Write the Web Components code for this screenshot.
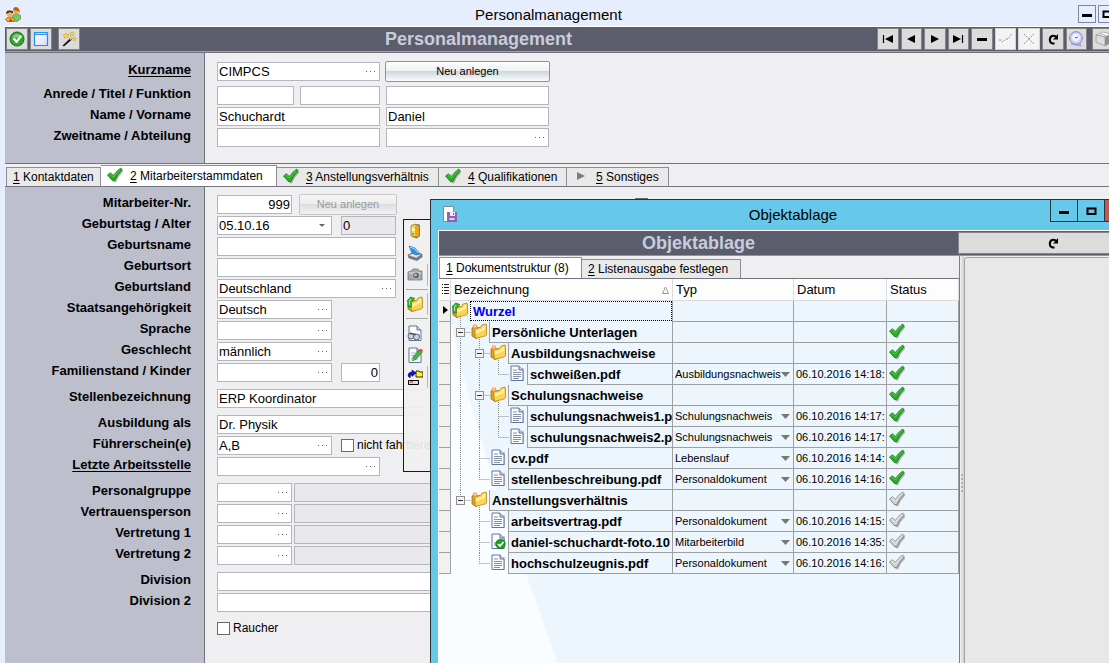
<!DOCTYPE html>
<html lang="de">
<head>
<meta charset="utf-8">
<title>Personalmanagement</title>
<style>
html, body { height: 100%; margin: 0; }
body { font: 13px/17px "Liberation Sans", Arial, sans-serif; color: #000; background: #efeff1; overflow: hidden; }
</style>
</head>
<body>
<pm-app></pm-app>

<script>
const define = (name, css, html, setup) => customElements.define(name, class extends HTMLElement {
  connectedCallback() {
    if (this.shadowRoot) return;
    const t = document.createElement('template');
    t.innerHTML = `<style>*{box-sizing:border-box}${css}</style>${typeof html === 'function' ? html(this) : html}`;
    this.attachShadow({ mode: 'open' }).append(t.content.cloneNode(true));
    if (setup) setup(this);
  }
});

/* ---------- icons ---------- */
const page = '<path d="M2 1h8l4 4v10.500H2z" fill="#fcfdff" stroke="#60749c"/><path d="M10 1v4h4" fill="#c6d4ee" stroke="#60749c"/>';
const folder = '<path d="M1 5l4-2 1 2 3-.5V14l-4 1.500L1 13z" fill="#d9a41f" stroke="#8f6a12" stroke-width=".7"/><path d="M3.500 6l6-1.500 1.500-2.500 4-1 .5 1V12l-1.500 1-9.500 2.500z" fill="#fbd453" stroke="#a97c14" stroke-width=".7"/><path d="M5 7.500l5.500-1.500L12 3.500l2-.7v4L5 11z" fill="#fff0a0"/>';
const tick = (a, b, c) => `<path d="M1.500 9l3-2.500L7 9.500Q10 4.500 14.500 2l1.500 1.500Q11 8 8.500 14.500H6.500z" fill="#777" opacity=".55" transform="translate(.6 .8)"/><path d="M.5 8l3-2.300L6.300 8.500Q10 3.500 13.700 1L15.200 2.800Q10.500 7.500 7.800 13.500H5.300z" fill="${a}" stroke="${b}" stroke-width=".7"/><path d="M2.500 8L3.700 7l2.600 3Q9 6 13 2.700" fill="none" stroke="${c}" stroke-width=".7"/>`;
const ICONS = {
  users: '<circle cx="11" cy="4" r="3" fill="#f2a23a"/><path d="M8 3.500q3-5 6.500.5l.5 3-2-2-4-1z" fill="#c85e12"/><path d="M7.500 15V9.500q3.500-4 8 0V13L12 15.500z" fill="#7cc860" stroke="#3a7c2c" stroke-width=".6"/><circle cx="4.500" cy="8" r="2.800" fill="#f0b44c"/><path d="M1 8q0-4 4-3.500 4 0 3 3l-3-1.500z" fill="#4c2a14"/><path d="M.5 13q4-4 9 0l-1 2.500H2z" fill="#f0b424" stroke="#8a4a10" stroke-width=".6"/><path d="M5 12l3 3.500-4 .5z" fill="#d43820"/>',
  ok: '<circle cx="8" cy="8" r="7" fill="#2ea82e" stroke="#137213"/><path d="M3 6q5-6 10 0-5 1-10 0z" fill="#82d27e"/><path d="M3.500 8l2-1.500L7.500 9l4-5L13 5.500 8 12H7z" fill="#fff"/>',
  window: '<defs><linearGradient id="w" x2="1" y2="1"><stop stop-color="#fff"/><stop offset="1" stop-color="#d4dcf8"/></linearGradient></defs><path d="M1.500 1.500h13v13h-13z" fill="url(#w)" stroke="#1f8fee" stroke-width="1.200"/><path d="M1 1h14v3H1z" fill="#2a96f4"/><path d="M2.500 2.500h11" stroke="#b5e0ff"/>',
  wand: '<path d="M1.500 14.500l8-7.500 1.500 1.500-8 7z" fill="#1a1a1a"/><path d="M8.500 8l2-1.500 1 1L9.700 9z" fill="#fff" stroke="#555" stroke-width=".5"/><g fill="#ffd935" stroke="#c9961a" stroke-width=".5"><path d="M5 2l1 1.500 2 .2-1.300 1.300.3 2L5 6l-2 1 .4-2L2 3.700l2-.2z"/><path d="M11 .5l.7 1.500 1.800.2-1.300 1.200.3 1.700L11 4.300 9.300 5l.4-1.600L8.500 2.200 10.300 2z"/><path d="M13.500 6l.5 1 1.500.3-1 1 .2 1.400-1.200-.7-1.300.7.2-1.500-1-1 1.400-.2z"/></g>',
  first: '<path d="M3.500 4v8" stroke="#000" stroke-width="1.200"/><path d="M13 4v8L5 8z"/>',
  prev: '<path d="M12 4v8L4 8z"/>', next: '<path d="M4 4v8L12 8z"/>',
  last: '<path d="M12.500 4v8" stroke="#000" stroke-width="1.200"/><path d="M3 4v8L11 8z"/>',
  minus: '<path d="M3 7h10v3H3z"/>',
  commit: '<path d="M1 9h2l2 3 3-4h2l4-5" fill="none" stroke="#fff" transform="translate(1 1)"/><path d="M1 9h2l1.500 2L8 8h2l4-5" fill="none" stroke="#8e8e8e" stroke-dasharray="2 1"/>',
  cancel: '<path d="M4 4l10 10M14 4L4 14" stroke="#fff"/><path d="M3 3l10 10M13 3L3 13" stroke="#8e8e8e" stroke-dasharray="2 1"/>',
  reload: '<path d="M9.500 12.500H7.500C4 11.500 4 6.500 7 5q2.500-1 4.500 1" fill="none" stroke="#000" stroke-width="2"/><path d="M13 3v5.500H8z"/>',
  clock: '<path d="M3 13l10 2-1-3H5z" fill="#b4b8e8" stroke="#7f83bd" stroke-width=".6"/><circle cx="8" cy="7" r="6.300" fill="#cfd3fa" stroke="#8084c8"/><circle cx="8" cy="6.500" r="3.800" fill="#f2f4ff"/><path d="M8 7l2-1M7 6l1 1" stroke="#5a5eae"/>',
  cube: '<path d="M1 4l7-3 8 2-6 3z" fill="#fafafa" stroke="#888" stroke-width=".6"/><path d="M1 4l9 2v9l-9-4z" fill="#ddd" stroke="#888" stroke-width=".6"/><path d="M10 6l6-3v9l-6 3z" fill="#8e8e8e"/><path d="M5 3l6 1.500" stroke="#aaa"/>',
  play: '<path d="M4 4v8L12 8z" fill="#7c7c7c"/>',
  check: tick('#27ae24', '#157015', '#6bd95c'), checkgray: tick('#d2d2d2', '#6e6e6e', '#f6f6f6'),
  doc: '<path d="M4 3h11v13H4z" fill="#8b94a8" opacity=".5"/>' + page + '<path d="M4 5h4M4 7.500h8M4 9.500h8M4 11.500h8M4 13.500h6" stroke="#8490a8"/>',
  docok: '<path d="M4 3h11v13H4z" fill="#8b94a8" opacity=".5"/>' + page + '<path d="M4 9h4v4H4z" fill="#b9c6dc"/><circle cx="10.500" cy="11" r="4.800" fill="#23a023" stroke="#0f6d12" stroke-width=".6"/><path d="M8 11l2 2 3.500-4" fill="none" stroke="#fff" stroke-width="1.700"/>',
  folder: folder + '<circle cx="4" cy="3.500" r="2.300" fill="#ff9a4a" opacity=".9"/><circle cx="4" cy="3.500" r=".9" fill="#fff2c8"/>',
  root: folder + '<path d="M1 11V5L0 5 3.500 1 8 2.500 6 4Q3.500 6 4.500 11z" fill="#3fb336" stroke="#1b741b" stroke-width=".7"/><path d="M2.500 9V5L4 3" fill="none" stroke="#a6e89c"/>',
  save: '<path d="M1.500.5h10v15h-10z" fill="#fff" stroke="#8a8a92"/><path d="M5 6h10v10H5z" fill="#8f62b4"/><path d="M8 6h5v4H8z" fill="#f2eafa"/><path d="M11 7h1v2h-1z" fill="#8f62b4"/><path d="M7.500 12h5v2h-5z" fill="#e2d2ef"/>',
  binder: '<path d="M5 2l6-1 2 1v11l-3 2.500-5-1.500z" fill="#777b80"/><path d="M4 2.500l5-1.500v13l-5-1z" fill="#ffd045" stroke="#9a741c" stroke-width=".7"/><path d="M9 2l3 1v10l-3 1z" fill="#e9a51c"/><path d="M5 5h2.500v3H5z" fill="#fff7cc"/><path d="M5 10h2v2H5z" fill="#6fbf4c"/>',
  scanner: '<path d="M1 10l4-2 10 1v3l-5 3.500L2 13z" fill="#77808b" stroke="#505860" stroke-width=".6"/><path d="M2 10.500l4-2 8 1-4.500 3z" fill="#e3e8ee"/><path d="M2 1l6 2 5 6-4 1-4-2z" fill="#2f94df" stroke="#1b64a8" stroke-width=".6"/><path d="M3 2l5 2 3 4" stroke="#a5dcff" fill="none"/>',
  camera: '<path d="M1 5l3-1 2-2h5l1 2h3v9H1z" fill="#a6a9b0" stroke="#6c6f78" stroke-width=".7"/><path d="M2 6h12" stroke="#e0e2e6"/><circle cx="9" cy="8.500" r="3.500" fill="#5a5e68" stroke="#ddd" stroke-width=".8"/><circle cx="8.500" cy="8" r="1.500" fill="#b4bac8"/>',
  search: page + '<path d="M11 10l3-2v5z" fill="#b6c4dc"/><circle cx="4" cy="11" r="3" fill="#c9d2da" stroke="#5c6672"/><circle cx="9.500" cy="12" r="3" fill="#c9d2da" stroke="#5c6672"/><path d="M3 8.500l6 1" stroke="#4c5662" stroke-width="1.500"/>',
  edit: page + '<path d="M4 6h6M4 8.500h4M4 12h7" stroke="#9fb6e0"/><path d="M5 14l1-4 6-7 3 2.500-6 7z" fill="#49b53d" stroke="#226e1d" stroke-width=".6"/><path d="M12 3l1.500-1.500 2.500 2L15 5.500z" fill="#e84a3c"/><path d="M5 14l.7-2.500L7 12.700z" fill="#e8c88e"/>',
  move: '<path d="M1 7Q1 3 5 3V1l4 3-4 3.500V6Q3 6 3 9z" fill="#1010e8" stroke="#000" stroke-width=".5"/><path d="M9 2h3l1 1h3v5H9z" fill="#fff22e" stroke="#000" stroke-width=".8"/><path d="M1.500 11.500h10v4h-10z" fill="#ddd" stroke="#000"/><path d="M3 13h3" stroke="#e01010"/>',
  min: '<path d="M3 8h10v3H3z"/>', max: '<path d="M4.500 5.500h8v5.500h-8z" fill="none" stroke="#000" stroke-width="2"/>'
};
define('pm-icon', ':host{display:block;flex:none;width:16px;height:16px}svg{display:block;width:100%;height:100%}',
  el => `<svg viewBox="0 0 16 16" aria-hidden="true">${ICONS[el.getAttribute('name')]}</svg>`);

define('tool-button', `:host{display:block;width:22px;height:22px}
button{display:flex;align-items:center;justify-content:center;width:100%;height:100%;padding:0;border:1px solid #858587;background:#dcdcdc}
:host([off]) button{background:#f3f3f3;border-color:#d4d4d4}`,
  el => `<button type="button" aria-label="${el.getAttribute('icon')}"><pm-icon name="${el.getAttribute('icon')}"></pm-icon></button>`);

/* ---------- tabs: items are "icon|key|text|width" ---------- */
define('tab-strip', `:host{display:block;background:#efeff1}
div{display:flex;align-items:flex-end;padding:var(--tab-pad,1px 1px 0);border-bottom:1px solid #72757d}
button{display:flex;align-items:center;gap:7px;height:19px;margin:0;padding:0 6px;border:1px solid #8a8e97;border-width:1px 1px 0 0;background:#e9e9ea;font:12px/17px "Liberation Sans",Arial,sans-serif;color:#000;white-space:pre;text-align:left}
button:first-child{border-left-width:1px}
button[aria-selected=true]{height:21px;background:#fff}
pm-icon{margin-top:-2px}
u{text-underline-offset:2px}`,
  el => `<div role="tablist">${el.getAttribute('items').split(';').map((s, i) => {
    const [icon, key, text, w] = s.split('|');
    return `<button role="tab" aria-selected="${i == el.getAttribute('selected')}" style="width:${w}px">${icon ? `<pm-icon name="${icon}"></pm-icon>` : ''}<span><u>${key}</u> ${text}</span></button>`;
  }).join('')}</div>`);

/* ---------- one form line: a caption and its controls ---------- */
const control = (f, id, label) => {
  const gap = f.gap ? `margin-left:${f.gap}px;` : '';
  if (f.kind === 'button') return `<button type="button" style="${gap}width:${f.w}px" ${f.off ? 'disabled' : ''}>${f.v}</button>`;
  if (f.kind === 'check') return `<span class="check" style="${gap}"><input type="checkbox" id="${id}" ${f.v ? '' : 'aria-label="Option"'}>${f.v ? `<label for="${id}">${f.v}</label>` : ''}</span>`;
  return `<span class="box ${f.kind || ''} ${f.ro ? 'ro' : ''}" style="${gap}width:${f.w}px"><input id="${id}" aria-label="${label}" value="${f.v || ''}" ${f.ro ? 'readonly' : ''} class="${f.right ? 'right' : ''}">${f.kind === 'dots' ? '<svg viewBox="0 0 9 2"><path d="M0 0h1v1H0zM4 0h1v1H4zM8 0h1v1H8z" fill="#666"/></svg>' : f.kind === 'date' ? '<svg class="arrow" viewBox="0 0 6 3"><path d="M0 0h6L3 3z" fill="#666"/></svg>' : ''}</span>`;
};
define('form-line', `:host{display:flex;height:19px;align-items:center;white-space:nowrap}
.caption{flex:none;width:200px;padding-right:14px;text-align:right;font-weight:bold;line-height:17px;padding-bottom:4px;text-underline-offset:2px}
:host([link]) .caption{text-decoration:underline}
.controls{display:flex;align-items:center;padding-left:12px}
.box{position:relative;flex:none;display:flex;height:19px;border:1px solid #b3b6bd;background:#fff}
.box.ro{background:#e9e9eb}
.box input{flex:1;min-width:0;padding:0 1px;border:0;background:none;font:inherit;line-height:17px;outline:0}
.right{text-align:right}
.box svg{flex:none;align-self:center;width:9px;height:2px;margin-right:4px}
.box svg.arrow{width:6px;height:3px;margin-right:6px}
button{flex:none;height:21px;padding:0;border:1px solid #8b949c;border-radius:2px;background:linear-gradient(#fdfdfe,#eef1f4 45%,#cfd7df 50%,#dfe6ec 70%,#fbfcfd);font:11px/17px "Liberation Sans",Arial,sans-serif;color:#000}
button:disabled{border-color:#c6c6c8;background:linear-gradient(#f6f6f6,#ededed 45%,#dedede 50%,#f2f2f2);color:#9a9a9c}
.check{display:flex;align-items:center;gap:3px;font-size:12px}
.check input{appearance:none;width:13px;height:13px;margin:0;border:1px solid #6a6a6a;background:#fff}`,
  el => {
    const label = el.getAttribute('label') || '';
    const fields = JSON.parse(el.getAttribute('fields'));
    return `<label class="caption" ${label ? 'for="f0"' : ''}>${label}</label><div class="controls">${fields.map((f, i) => control(f, 'f' + i, label || 'Feld')).join('')}</div>`;
  });

define('form-block', `:host{display:block;overflow:hidden;background:linear-gradient(90deg,#bdbfcd 199px,#70737b 199px,#70737b 200px,#efeff1 200px)}
form-line{margin-top:2px}form-line:first-child{margin-top:0}form-line[space="5"]{margin-top:5px}form-line[space="7"]{margin-top:7px}`,
  '<div></div>', el => {
    const holder = el.shadowRoot.querySelector('div');
    for (const [label, fields, space, link] of FORMS[el.getAttribute('data')]) {
      const line = document.createElement('form-line');
      line.setAttribute('label', label);
      line.setAttribute('fields', JSON.stringify(fields));
      if (space) line.setAttribute('space', space);
      if (link) line.setAttribute('link', '');
      holder.append(line);
    }
  });

const dots = (w, v, gap) => ({ w, v, gap, kind: 'dots' });
const box = (w, v, gap) => ({ w, v, gap });
const pair = [dots(75), { w: 254, gap: 2, ro: 1 }];
const FORMS = {
  head: [
    ['Kurzname', [dots(163, 'CIMPCS'), { kind: 'button', w: 165, v: 'Neu anlegen', gap: 5 }], 0, 1],
    ['Anrede / Titel / Funktion', [box(77), box(80, '', 6), box(163, '', 6)], 5],
    ['Name / Vorname', [box(163, 'Schuchardt'), box(163, 'Daniel', 6)]],
    ['Zweitname / Abteilung', [box(163), dots(163, '', 6)]]
  ],
  detail: [
    ['Mitarbeiter-Nr.', [{ w: 75, v: '999', right: 1 }, { kind: 'button', w: 98, v: 'Neu anlegen', gap: 7, off: 1 }, { kind: 'check', gap: 238 }]],
    ['Geburtstag / Alter', [{ w: 115, v: '05.10.16', kind: 'date' }, { w: 55, v: '0', gap: 9, ro: 1 }]],
    ['Geburtsname', [box(179)]], ['Geburtsort', [box(179)]],
    ['Geburtsland', [dots(179, 'Deutschland')]],
    ['Staatsangehörigkeit', [dots(115, 'Deutsch')]],
    ['Sprache', [dots(115)]],
    ['Geschlecht', [dots(115, 'männlich')]],
    ['Familienstand / Kinder', [dots(115), { w: 39, v: '0', gap: 9, right: 1 }]],
    ['Stellenbezeichnung', [box(331, 'ERP Koordinator')], 7],
    ['Ausbildung als', [box(331, 'Dr. Physik')], 7],
    ['Führerschein(e)', [dots(115, 'A,B'), { kind: 'check', v: 'nicht fahrbereit', gap: 9 }]],
    ['Letzte Arbeitsstelle', [dots(163)], 0, 1],
    ['Personalgruppe', pair, 7], ['Vertrauensperson', pair], ['Vertretung 1', pair], ['Vertretung 2', pair],
    ['Division', [box(331)], 7], ['Division 2', [box(331)]],
    ['', [{ kind: 'check', v: 'Raucher' }], 7]
  ]
};

/* ---------- floating tool palette ---------- */
define('tool-palette', `:host{display:flex;flex-direction:column;border:1px solid #1a1a1a;background:rgba(240,240,241,.93)}
button{display:flex;align-items:center;height:22px;padding:0 0 0 3px;border:0;background:none;margin-right:2px}
.bar{border-right:1px solid #b5b5b8}
hr{width:22px;margin:3px 0 3px 2px;border:0;border-top:1px solid #a9a9ac}`,
  ['binder', 'scanner', '*camera', '-', '*root', '-', 'search', 'edit', '*move'].map(n => n === '-' ? '<hr>' : `<button type="button" ${n[0] === '*' ? 'class="bar"' : ''} aria-label="${n.replace('*', '')}"><pm-icon name="${n.replace('*', '')}"></pm-icon></button>`).join(''));

/* ---------- document tree ---------- */
const DOCS = [
  [0, 'root', 'Wurzel'],
  [1, 'folder', 'Persönliche Unterlagen', '', '', 1],
  [2, 'folder', 'Ausbildungsnachweise', '', '', 1],
  [3, 'doc', 'schweißen.pdf', 'Ausbildungsnachweis', '06.10.2016 14:18:', 1],
  [2, 'folder', 'Schulungsnachweise', '', '', 1],
  [3, 'doc', 'schulungsnachweis1.p', 'Schulungsnachweis', '06.10.2016 14:17:', 1],
  [3, 'doc', 'schulungsnachweis2.p', 'Schulungsnachweis', '06.10.2016 14:17:', 1],
  [2, 'doc', 'cv.pdf', 'Lebenslauf', '06.10.2016 14:14:', 1],
  [2, 'doc', 'stellenbeschreibung.pdf', 'Personaldokument', '06.10.2016 14:16:', 1],
  [1, 'folder', 'Anstellungsverhältnis', '', '', 2],
  [2, 'doc', 'arbeitsvertrag.pdf', 'Personaldokument', '06.10.2016 14:15:', 2],
  [2, 'docok', 'daniel-schuchardt-foto.10', 'Mitarbeiterbild', '06.10.2016 14:35:', 2],
  [2, 'doc', 'hochschulzeugnis.pdf', 'Personaldokument', '06.10.2016 14:16:', 2]
];
const continues = (i, level) => {
  for (let j = i + 1; j < DOCS.length; j++) {
    if (DOCS[j][0] < level) return false;
    if (DOCS[j][0] === level) return true;
  }
  return false;
};
const gutter = (i) => {
  const [level, icon] = DOCS[i];
  let s = '';
  for (let l = 1; l <= level; l++) {
    const x = 19 * l - 9.5, more = continues(i, l);
    if (l === level) s += `<path d="M${x} 0V${more ? 21 : 10.5}M${x} 10.500H${19 * l + 1}"/>`;
    else if (more) s += `<path d="M${x} 0V21"/>`;
  }
  if (icon === 'folder' || icon === 'root') s += `<path d="M${19 * level + 9.5} 17V21"/>`;
  const w = 19 * (level + 1);
  const x = 19 * level - 14;
  const knob = icon === 'folder' ? `<rect x="${x + .5}" y="6.500" width="8" height="8" fill="#f4f4f4" stroke="#909090"/><path d="M${x + 2} 10.500h5" stroke="#333"/>` : '';
  const iconX = 19 * level + (icon === 'folder' || icon === 'root' ? 1 : 1);
  return `<svg width="${w}" height="21" viewBox="0 0 ${w} 21"><g fill="none" stroke="#8c8c8c" stroke-dasharray="1 1">${s}</g>${knob}<svg x="${iconX}" y="1" width="16" height="16" viewBox="0 0 16 16">${ICONS[icon]}</svg></svg>`;
};
define('document-tree', `:host{display:block;position:relative;flex:1;overflow:hidden;background:#edf5fd}
.sweep{position:absolute;left:0;top:42px;width:130px;height:345px}
table{position:relative;width:100%;border-collapse:separate;border-spacing:0;table-layout:fixed}
th{height:22px;padding:0 3px;border-right:1px solid #dcdcde;border-bottom:1px solid #d8dade;background:#fdfdfd;font-weight:normal;text-align:left;line-height:17px}
th svg{display:block}
th span{display:flex;justify-content:space-between;align-items:center}
td{height:21px;padding:0;border-right:1px solid #a0a0a0;border-bottom:1px solid #a0a0a0;background:#edf5fd;font-size:11px;line-height:17px;overflow:hidden;white-space:nowrap}
td:first-child{background:#f1f1f1}
td.tree{border-bottom:0;background:none}
.tree div{display:flex;height:21px}
.tree svg{flex:none;display:block}
.name{flex:1;min-width:0;overflow:hidden;border-left:1px solid #a0a0a0;border-bottom:1px solid #a0a0a0;background:#edf5fd;padding:2px 0 0 2px;font:bold 13px/17px "Liberation Sans",Arial,sans-serif}
.name.root{border:1px dotted #000;color:#0000f0;padding-top:1px;height:20px}
select{display:block;appearance:none;width:100%;height:19px;margin:0;padding:0 0 0 2px;border:0;border-radius:0;font:11px/17px "Liberation Sans",Arial,sans-serif;color:#000;background:url("data:image/svg+xml,%3Csvg xmlns='http://www.w3.org/2000/svg' width='9' height='5'%3E%3Cpath d='M0 0h9L4.500 5z' fill='%23777'/%3E%3C/svg%3E") no-repeat right 3px center}
.date{padding-left:2px}
.state pm-icon{margin:-2px 0 0 2px}`,
  `<svg class="sweep" viewBox="0 0 130 345"><path d="M0 0h12Q26 70 52 150T120 345H0z" fill="#fafdff"/></svg>
<table><colgroup><col style="width:12px"><col style="width:222px"><col style="width:121px"><col style="width:93px"><col></colgroup>
<thead><tr><th><svg width="7" height="11" viewBox="0 0 7 11"><path d="M0 .5h1M2 .5h5M0 3.500h1M2 3.500h5M0 6.500h1M2 6.500h5M0 9.500h1M2 9.500h5" stroke="#222"/></svg></th><th><span>Bezeichnung <svg width="7" height="8" viewBox="0 0 7 8"><path d="M.5 7.500h6L3.500 1z" fill="none" stroke="#999"/></svg></span></th><th>Typ</th><th>Datum</th><th>Status</th></tr></thead>
<tbody>${DOCS.map(([level, icon, name, type, date, state], i) => `<tr><td>${i ? '' : '<svg width="11" height="10" viewBox="0 0 11 10"><path d="M4 1l5 4-5 4z"/></svg>'}</td><td class="tree"><div>${gutter(i)}<span class="name ${icon}">${name}</span></div></td><td>${type ? `<select aria-label="Typ"><option>${type}</option></select>` : ''}</td><td class="date">${date || ''}</td><td class="state">${state ? `<pm-icon name="${state === 1 ? 'check' : 'checkgray'}"></pm-icon>` : ''}</td></tr>`).join('')}</tbody></table>`);

define('object-window', `:host{display:flex;flex-direction:column;border:1px solid #27363e;border-bottom:0;background:#66c9ea}
.title{display:grid;grid-template-columns:110px 1fr 110px;height:30px;font-size:15px;line-height:30px;text-align:center}
.title pm-icon{margin:6px 0 0 11px}
.controls{display:flex;justify-self:end;height:22px}
.controls button{display:flex;align-items:center;justify-content:center;width:27px;padding:0;border:1px solid #27363e;border-width:0 0 1px 1px;background:none}
.controls pm-icon{margin:0}
.controls button.close{width:51px;background:#c75850}
.inner{flex:1;display:flex;flex-direction:column;min-height:0;margin:0 7px;border:1px solid #fff;border-bottom:0}
.bar{display:flex;height:25px;padding:1px 0;background:#5b5d6d;border-bottom:1px solid #93959d}
h2{flex:1;margin:0;font-size:18px;line-height:22px;text-align:center;color:#c9ccdb}
.bar tool-button{width:189px}
.panes{flex:1;display:flex;min-height:0;background:#efeff1}
.left{display:flex;flex-direction:column;width:521px;border-right:1px solid #7b7e87}
tab-strip{--tab-pad:1px 0 0}
.split{width:4px;background:linear-gradient(90deg,#f2f2f4,#cdcfd4)}
.split svg{display:block;width:4px;height:18px;margin-top:218px}
.right{flex:1;margin-top:1px;border:1px solid #a3a3a5;border-bottom:0;border-radius:3px 0 0 0;background:#e8e8e8}`,
  `<div class="title"><pm-icon name="save"></pm-icon><span>Objektablage</span><div class="controls"><button aria-label="Minimieren"><pm-icon name="min"></pm-icon></button><button aria-label="Maximieren"><pm-icon name="max"></pm-icon></button><button class="close" aria-label="Schließen"></button></div></div>
<div class="inner"><div class="bar"><h2>Objektablage</h2><tool-button icon="reload"></tool-button></div>
<div class="panes"><div class="left"><tab-strip selected="0" items="|1|Dokumentstruktur (8)|143;|2|Listenausgabe festlegen|159"></tab-strip><document-tree></document-tree></div>
<div class="split"><svg viewBox="0 0 4 18"><path d="M1 1h2M1 5h2M1 9h2M1 13h2M1 17h2" stroke="#888"/></svg></div><div class="right"></div></div></div>`);

define('pm-app', `:host{display:flex;flex-direction:column;position:relative;min-height:100vh;padding-left:5px;overflow:hidden;background:#e6edfd}
.title{display:flex;height:27px;border-bottom:1px solid #fff;font-size:15px;line-height:29px}
.title>pm-icon{margin-top:6px}
.title span{flex:1;text-align:center}
.title button{display:flex;align-items:center;justify-content:center;width:18px;height:18px;margin:5px 0 0 2px;padding:0;border:1px solid #8286a4;background:#e6edfd}
.title button:last-child{margin-right:-7px}
.bar{display:flex;gap:2px;height:25px;padding:1px 0 1px 1px;background:#5b5d6d;border-bottom:1px solid #a0a2aa}
.bar .wand{margin-left:4px}
h1{flex:1;margin:0;font-size:18px;line-height:22px;text-align:center;color:#c9ccdb}
.nav{display:flex;gap:2px;width:210px}
.nav tool-button{flex:1}
.bar .cube{margin:0 -5px 0 3px}
.head{padding:9px 0 16px;border-top:1px solid #70737b;border-bottom:1px solid #70737b}
.detail{flex:1;padding-top:8px}
tool-palette{position:absolute;left:403px;top:219px;width:28px;height:253px}
object-window{position:absolute;left:430px;right:-47px;top:199px;bottom:0}`,
  `<div class="title"><pm-icon name="users"></pm-icon><span>Personalmanagement</span><button aria-label="Minimieren"><pm-icon name="min"></pm-icon></button><button aria-label="Maximieren"><pm-icon name="max"></pm-icon></button></div>
<div class="bar"><tool-button icon="ok"></tool-button><tool-button icon="window"></tool-button><tool-button class="wand" icon="wand"></tool-button><h1>Personalmanagement</h1><div class="nav"><tool-button icon="first"></tool-button><tool-button icon="prev"></tool-button><tool-button icon="next"></tool-button><tool-button icon="last"></tool-button><tool-button icon="minus"></tool-button><tool-button off icon="commit"></tool-button><tool-button off icon="cancel"></tool-button><tool-button icon="reload"></tool-button><tool-button icon="clock"></tool-button></div><tool-button class="cube" icon="cube"></tool-button></div>
<form-block class="head" data="head"></form-block>
<tab-strip selected="1" items="|1|Kontaktdaten|95;check|2|Mitarbeiterstammdaten|176;check|3|Anstellungsverhältnis|162;check|4|Qualifikationen|128;play|5|Sonstiges|102"></tab-strip>
<form-block class="detail" data="detail"></form-block>
<tool-palette></tool-palette><object-window></object-window>`);
</script>
</body>
</html>
